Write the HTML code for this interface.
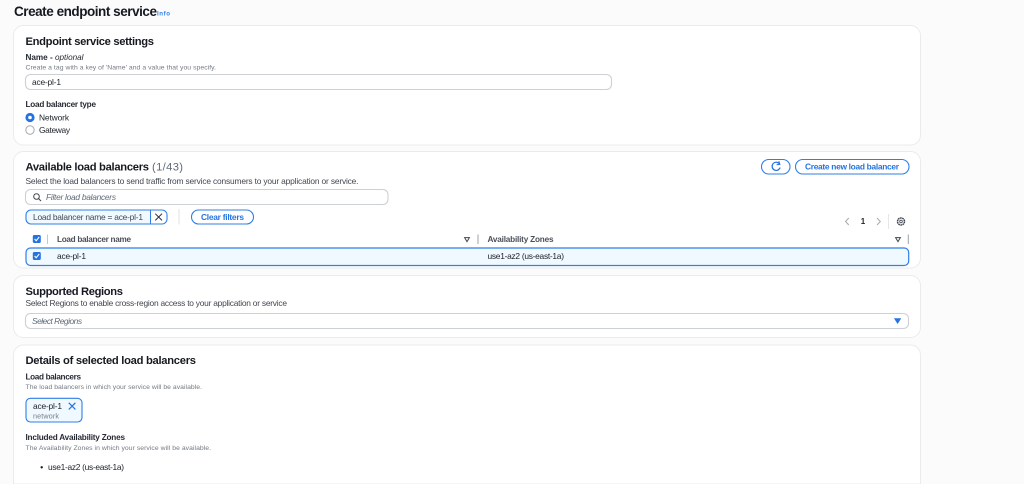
<!DOCTYPE html>
<html><head><meta charset="utf-8"><style>
html,body{margin:0;padding:0;background:#fbfbfb;width:1024px;height:484px;overflow:hidden}
svg{display:block;width:1024px;height:484px;overflow:hidden;filter:blur(.35px)}
text{font-family:"Liberation Sans",sans-serif;font-size:8.4px;fill:#20252c}
.h{font-weight:bold;font-size:11.2px;fill:#16191f}
.l{font-weight:bold;font-size:8.2px;fill:#262b33}
.d{font-size:6.8px;fill:#747b84}
.g{fill:#414750}
.lg{font-weight:bold;font-size:8.2px;fill:#4a5059}
.b{font-weight:bold;fill:#2473e0}
.i{font-style:italic;fill:#5f6b7a}
.card{fill:#fff;stroke:#e9ebed;stroke-width:1}
.inp{fill:#fff;stroke:#cdd0d4;stroke-width:1.1}
.btn{fill:#fff;stroke:#2f7fe6;stroke-width:1.1}
</style></head><body>
<svg width="1024" height="484" viewBox="0 0 1024 484" xmlns="http://www.w3.org/2000/svg">
<text x="14" y="16" font-weight="bold" style="font-size:13.5px;fill:#16191f" textLength="143">Create endpoint service</text>
<text x="157" y="15.5" style="font-size:6.2px;font-weight:bold;fill:#2f7fe6" textLength="13">Info</text>

<rect class="card" x="13.5" y="25.5" width="907" height="119.5" rx="10"/>
<text x="25.5" y="45" class="h" textLength="128.5">Endpoint service settings</text>
<text x="25.5" y="60" class="l" textLength="58">Name - <tspan font-style="italic" font-weight="normal">optional</tspan></text>
<text x="25.5" y="69.5" class="d" textLength="190.5">Create a tag with a key of 'Name' and a value that you specify.</text>
<rect class="inp" x="25.5" y="74.5" width="586" height="15" rx="5"/>
<text x="32" y="85" textLength="29">ace-pl-1</text>
<text x="25.5" y="107" class="l" textLength="70.5">Load balancer type</text>
<circle cx="30" cy="117.5" r="3.2" fill="#fff" stroke="#2473e0" stroke-width="2.8"/>
<text x="39" y="120.5" textLength="30">Network</text>
<circle cx="30" cy="130" r="4.2" fill="#fff" stroke="#a5aab0" stroke-width="1"/>
<text x="39" y="132.8" textLength="31">Gateway</text>

<rect class="card" x="13.5" y="151.5" width="907" height="116.5" rx="10"/>
<text x="25.5" y="170.5" class="h" textLength="123.5">Available load balancers</text>
<text x="152" y="170.5" style="font-size:11.2px;fill:#5f6b7a" textLength="31">(1/43)</text>
<text x="25.5" y="184" class="g" textLength="333">Select the load balancers to send traffic from service consumers to your application or service.</text>
<rect class="inp" x="25.5" y="189.5" width="362.5" height="15" rx="5"/>
<circle cx="36.5" cy="196.5" r="2.8" fill="none" stroke="#414750" stroke-width="1"/>
<path d="M38.6 198.6L41 201" stroke="#414750" stroke-width="1.1" fill="none"/>
<text x="46" y="200" class="i" textLength="70">Filter load balancers</text>

<rect x="26" y="210" width="141" height="14" rx="5" fill="#f0f9ff" stroke="#2f7fe6" stroke-width="1.1"/>
<path d="M151 210.6H162a4.4 4.4 0 0 1 4.4 4.4V219a4.4 4.4 0 0 1 -4.4 4.4H151Z" fill="#fff"/>
<path d="M150.5 210V224" stroke="#2f7fe6" stroke-width="1"/>
<text x="33" y="220" class="g" textLength="110">Load balancer name = ace-pl-1</text>
<path d="M155.3 213.7L162 220.4M162 213.7L155.3 220.4" stroke="#232f3e" stroke-width="1" fill="none"/>
<path d="M179 209V224.5" stroke="#dfe2e4" stroke-width="1"/>
<rect class="btn" x="191.5" y="210" width="62" height="14" rx="7"/>
<text x="201" y="220" class="b" textLength="43">Clear filters</text>

<rect x="761.5" y="159.5" width="28.5" height="14.5" rx="7.2" class="btn"/>
<path d="M779.6 164A4.1 4.1 0 1 0 780.1 167.6" fill="none" stroke="#2473e0" stroke-width="1.2"/>
<path d="M778.8 161.2L779.9 164.4L776.6 164.8" fill="none" stroke="#2473e0" stroke-width="1"/>
<rect x="795.5" y="159.5" width="113.5" height="14.5" rx="7.2" class="btn"/>
<text x="805" y="169.5" class="b" textLength="94">Create new load balancer</text>

<path d="M848.8 218L845.5 221.5L848.8 225" fill="none" stroke="#a5aab0" stroke-width="1"/>
<text x="860.8" y="224.2" font-weight="bold" style="font-size:8px">1</text>
<path d="M877 218L880.3 221.5L877 225" fill="none" stroke="#a5aab0" stroke-width="1"/>
<path d="M888.5 214V229" stroke="#e4e6e8" stroke-width="1"/>
<circle cx="901" cy="221.5" r="3.5" fill="none" stroke="#414750" stroke-width="1.5" stroke-dasharray="1.7 .5"/>
<circle cx="901" cy="221.5" r="1.3" fill="none" stroke="#414750" stroke-width=".8"/>

<rect x="32.8" y="235" width="8" height="8" rx="1.5" fill="#2473e0"/>
<path d="M34.6 239L36.2 240.8L39.2 236.9" fill="none" stroke="#fff" stroke-width="1.1"/>
<path d="M47.5 234.5V244" stroke="#c4c8cc" stroke-width="1"/>
<text x="57" y="242" class="lg" textLength="74">Load balancer name</text>
<path d="M464.6 237.6H469.4L467 241.6Z" fill="#fff" stroke="#414750" stroke-width="1"/>
<path d="M478 234.5V244" stroke="#9ba1a8" stroke-width="1"/>
<text x="487.5" y="242" class="lg" textLength="66">Availability Zones</text>
<path d="M895.6 237.6H900.4L898 241.6Z" fill="#fff" stroke="#414750" stroke-width="1"/>
<path d="M908.3 234.5V244" stroke="#9ba1a8" stroke-width="1"/>

<rect x="26" y="248" width="882.7" height="17.5" rx="4.5" fill="#f0f9ff" stroke="#2f7fe6" stroke-width="1.2"/>
<rect x="32.8" y="252" width="8" height="8" rx="1.5" fill="#2473e0"/>
<path d="M34.6 256L36.2 257.8L39.2 253.9" fill="none" stroke="#fff" stroke-width="1.1"/>
<text x="57" y="259" textLength="29">ace-pl-1</text>
<text x="487.5" y="259" textLength="76.5">use1-az2 (us-east-1a)</text>

<rect class="card" x="13.5" y="275.5" width="907" height="62" rx="10"/>
<text x="25.5" y="295" class="h" textLength="97.5">Supported Regions</text>
<text x="25.5" y="305.8" class="g" textLength="261.5">Select Regions to enable cross-region access to your application or service</text>
<rect class="inp" x="25.5" y="313.5" width="883" height="15" rx="5"/>
<text x="32" y="324" class="i" textLength="50">Select Regions</text>
<path d="M894.5 318.6H900.7L897.6 323.4Z" fill="#2473e0" stroke="#2473e0" stroke-width=".6"/>

<path class="card" d="M13.5 484V355a10 10 0 0 1 10 -10H910.5a10 10 0 0 1 10 10V484Z"/>
<text x="25.5" y="364" class="h" textLength="170.5">Details of selected load balancers</text>
<text x="25.5" y="379.5" class="l" textLength="55.5">Load balancers</text>
<text x="25.5" y="389" class="d" textLength="176.5">The load balancers in which your service will be available.</text>
<rect x="26" y="398.3" width="56" height="23.7" rx="4.5" fill="#f0f9ff" stroke="#2f7fe6" stroke-width="1.1"/>
<text x="33" y="408.8" textLength="29">ace-pl-1</text>
<path d="M68.8 402.8L75.4 409.4M75.4 402.8L68.8 409.4" stroke="#2473e0" stroke-width="1.2" fill="none"/>
<text x="33" y="418.5" class="d" style="font-size:7.2px" textLength="26">network</text>
<text x="25.5" y="439.8" class="l" textLength="99.5">Included Availability Zones</text>
<text x="25.5" y="449.8" class="d" textLength="185.5">The Availability Zones in which your service will be available.</text>
<circle cx="41.7" cy="467.3" r="1.2" fill="#16191f"/>
<text x="48" y="470" textLength="76">use1-az2 (us-east-1a)</text>
</svg>
</body></html>
